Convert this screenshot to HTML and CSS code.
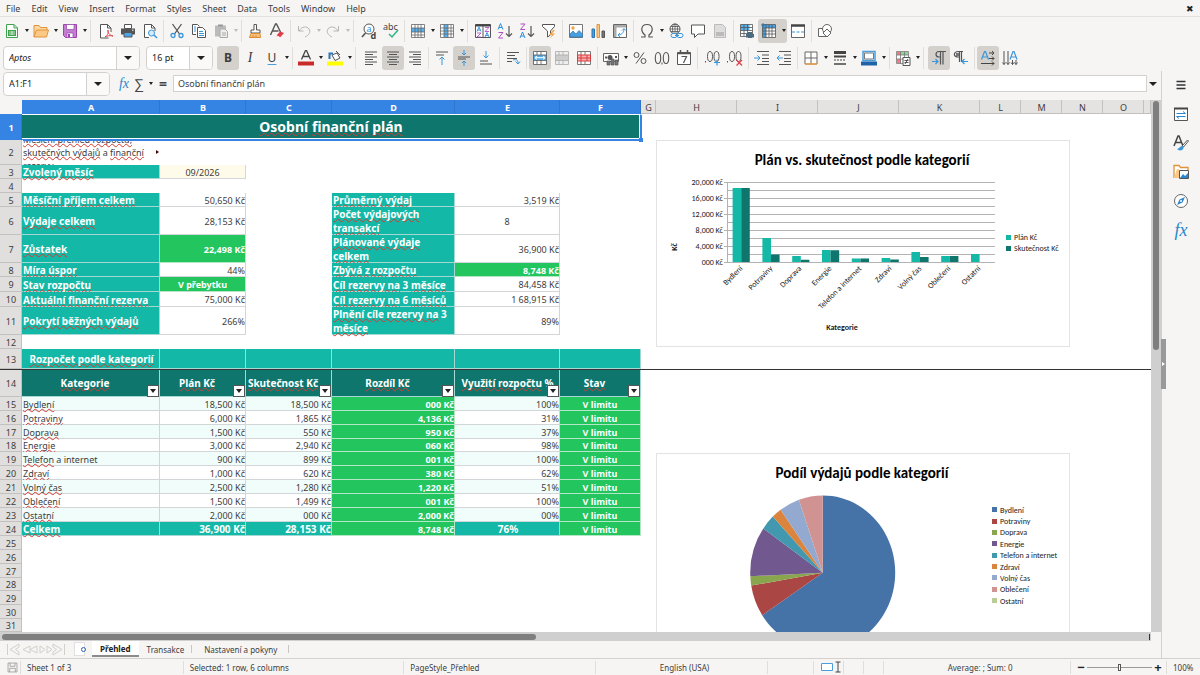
FILE: index.html
```html
<!DOCTYPE html>
<html lang="cs">
<head>
    <meta charset="UTF-8">
    <meta name="viewport" content="width=device-width, initial-scale=1.0">
    <title>Osobní finanční plán</title>
    <link rel="stylesheet" href="styles.css">
</head>
<body>
    <!-- icon sprite -->
    <svg class="sprite" aria-hidden="true">
        <symbol id="i-new" viewBox="0 0 16 16"><path d="M2.500 1.500h7.500l3.500 3.500v9.500h-11z" fill="#fff" stroke="#3fa34d"/><path d="M10 1.500v3.500h3.500" fill="none" stroke="#3fa34d"/><path d="M4 7h8v6h-8z" fill="#3fa34d"/><path d="M5 9h6M5 11h6M8 8v4" stroke="#fff" stroke-width=".7"/></symbol>
        <symbol id="i-open" viewBox="0 0 16 16"><path d="M1 14V2.500h5l1.500 2H14V7" fill="#fdd9a0" stroke="#e0933a"/><path d="M1 14 3.500 7H15.500L13.500 14z" fill="#fbc886" stroke="#e0933a"/></symbol>
        <symbol id="i-save" viewBox="0 0 16 16"><path d="M1.500 1.500h13v13h-11l-2-2z" fill="#c27fd0" stroke="#9a45ad"/><path d="M4.500 1.500h7.500v5h-7.500zM5 10h6v4.500h-6z" fill="#fff" stroke="#9a45ad" stroke-width=".7"/><path d="M6 11h2v3h-2z" fill="#9a45ad"/></symbol>
        <symbol id="i-pdf" viewBox="0 0 16 16"><path d="M10.500 15h-8V1.500h7l3.500 3.500v4" fill="#fff" stroke="#555"/><path d="M9.500 1.500v3.500H13" fill="none" stroke="#555"/><path d="M7 14c3-2 4-5 3-7-1 2 1 5 5 6-3-1-6 0-8 1" fill="none" stroke="#e0484a"/></symbol>
        <symbol id="i-print" viewBox="0 0 16 16"><path d="M4.500 1.500h7v4h-7z" fill="#fff" stroke="#555"/><path d="M1 5.500h14v6H1z" fill="#555"/><path d="M4 9.500h8v4.500H4z" fill="#4fa3e3" stroke="#555"/><path d="M12 7.200h1.500" stroke="#fff"/></symbol>
        <symbol id="i-preview" viewBox="0 0 16 16"><path d="M7 14.500H2.500v-13h7L13 5v3" fill="#fff" stroke="#555"/><path d="M9.500 1.500V5H13" fill="none" stroke="#555"/><circle cx="9.500" cy="10" r="3" fill="#d9ecfa" stroke="#3b95d9"/><path d="m12 12 3 3" stroke="#3b95d9" stroke-width="1.500"/></symbol>
        <symbol id="i-cut" viewBox="0 0 16 16"><path d="M3.500 1 10.500 11M12.500 1 5.500 11" stroke="#555" stroke-width="1.300"/><circle cx="4" cy="12.500" r="2" fill="none" stroke="#3b95d9" stroke-width="1.300"/><circle cx="12" cy="12.500" r="2" fill="none" stroke="#3b95d9" stroke-width="1.300"/></symbol>
        <symbol id="i-copy" viewBox="0 0 16 16"><path d="M5 11.500H1.500v-10h5l2 2" fill="#fff" stroke="#555"/><path d="M6.500 4.500h5l3 3v7h-8z" fill="#fff" stroke="#555"/><path d="M8 8.500h4M8 10.500h5M8 12.500h5M3 4h2M3 6h2M3 8h2" stroke="#3b95d9"/></symbol>
        <symbol id="i-paste" viewBox="0 0 16 16"><path d="M2 2.500h11v11H2z" fill="#bbb"/><path d="M5 1.500h5v2H5z" fill="#999"/><path d="M7 6h5l2.500 2.500v6H7z" fill="#eee" stroke="#aaa"/><path d="M9 10h4M9 12h4" stroke="#aaa"/></symbol>
        <symbol id="i-brush" viewBox="0 0 16 16"><path d="M7 1.500h2.500V7H13v3H4V7h3z" fill="#fff" stroke="#555"/><path d="M4 10.500h9l.5 4h-11z" fill="#f9c37a" stroke="#d98a32"/><path d="M6 12v2M9 12v2" stroke="#d98a32"/></symbol>
        <symbol id="i-clear" viewBox="0 0 16 16"><path d="M1.500 12 6.500 1h1L12 10M3.500 8h6" fill="none" stroke="#555" stroke-width="1.400"/><path d="m7 13 4-4.500 4 1.500-4 4.500z" fill="#e23c48"/><path d="M7 12.500 11 14.500" stroke="#fff"/></symbol>
        <symbol id="i-undo" viewBox="0 0 16 16"><path d="M2.500 3v5h5M3 8c3-5 8-5 10-2s0 6-4 8" fill="none" stroke="#b5b5b5"/></symbol>
        <symbol id="i-redo" viewBox="0 0 16 16"><path d="M13.500 3v5h-5M13 8c-3-5-8-5-10-2s0 6 4 8" fill="none" stroke="#b5b5b5"/></symbol>
        <symbol id="i-find" viewBox="0 0 16 16"><circle cx="8" cy="6" r="5" fill="#fff" stroke="#555"/><path d="M4.500 10 1 14" stroke="#555" stroke-width="1.600"/><text x="5.500" y="9" class="g blue">a</text><text x="9.500" y="15.500" class="g dark b">d</text></symbol>
        <symbol id="i-spell" viewBox="0 0 16 16"><text x="0" y="7" class="g dark">abc</text><path d="m6 11 3 3 6-7" fill="none" stroke="#2fb487" stroke-width="1.500"/></symbol>
        <symbol id="i-row" viewBox="0 0 16 16"><path d="M1.500 1.500h13v13h-13z" fill="#fff"/><path d="M1.500 5h13v4h-13z" fill="#57b0ec"/><path d="M1.500 1.500h13v13h-13zM1.500 5h13M1.500 9h13M1.500 12h13M5 1.500v13M8 1.500v13M11 1.500v13" fill="none" stroke="#666" stroke-width=".8"/></symbol>
        <symbol id="i-col" viewBox="0 0 16 16"><path d="M1.500 1.500h13v13h-13z" fill="#fff"/><path d="M5 1.500h4v13H5z" fill="#57b0ec"/><path d="M1.500 1.500h13v13h-13zM1.500 5h13M1.500 8h13M1.500 11h13M5 1.500v13M9 1.500v13M12 1.500v13" fill="none" stroke="#666" stroke-width=".8"/></symbol>
        <symbol id="i-sort" viewBox="0 0 16 16"><path d="M.5 1.500h15v13H.5z" fill="#fff" stroke="#555"/><path d="M.5 2.500h15" stroke="#444" stroke-width="2"/><path d="M8 3v11" stroke="#555"/><g fill="none" stroke-width=".9"><path d="m2 8.500 2-4.500 2 4.500M2.700 7h2.600M10 14l2-4.500 2 4.500M10.700 12.500h2.600" stroke="#2b8fdc"/><path d="M2 10h4l-4 4h4M10 4.500h4l-4 4h4" stroke="#b04fc4"/></g></symbol>
        <symbol id="i-az" viewBox="0 0 16 16"><path d="m1 6.500 2.500-6 2.500 6M2 4.500h3" fill="none" stroke="#2b8fdc"/><path d="M1.500 9.500H6L1.500 15H6" fill="none" stroke="#b04fc4"/><path d="M12 3v10M9 10.500l3 3 3-3" fill="none" stroke="#555" stroke-width="1.200"/></symbol>
        <symbol id="i-za" viewBox="0 0 16 16"><path d="M1.500 1H6L1.500 6.500H6" fill="none" stroke="#b04fc4"/><path d="m1 15 2.500-6L6 15M2 13h3" fill="none" stroke="#2b8fdc"/><path d="M12 3v10M9 10.500l3 3 3-3" fill="none" stroke="#555" stroke-width="1.200"/></symbol>
        <symbol id="i-filter" viewBox="0 0 16 16"><path d="M1.500 1.500h12v2L9.500 8v4l-3 2V8l-5-4.500z" fill="#fff" stroke="#555"/><path d="m12 7-4 5h3l-2 3.500 5-5h-3l3-3.500z" fill="#f3a446"/></symbol>
        <symbol id="i-image" viewBox="0 0 16 16"><path d="M1.500 1.500h13v13h-13z" fill="#fff" stroke="#777"/><path d="M2 14V11l3-3 3 3 3-3.500 3.500 3.500v3z" fill="#4a9ede" stroke="#2b76b4" stroke-width=".7"/><circle cx="5" cy="5" r="1.700" fill="#f3a446"/></symbol>
        <symbol id="i-chart" viewBox="0 0 16 16"><path d="M2 6h2.500v8.500H2z" fill="#4a9ede" stroke="#2b76b4"/><path d="M7 1.500h2.500v13H7z" fill="#fbc886" stroke="#e0933a"/><path d="M12 8h2.500v6.500H12z" fill="#777" stroke="#555"/></symbol>
        <symbol id="i-pivot" viewBox="0 0 16 16"><path d="M1.500 1.500h13v13h-13z" fill="#fff" stroke="#666"/><path d="M2 2h12v2.500H4.500V14H2z" fill="#aaa"/><path d="M6 12c3 0 6-2 6-6M10 7.500l2-2 2 2M8 10l-2 2 2 2" fill="none" stroke="#3b95d9"/></symbol>
        <symbol id="i-omega" viewBox="0 0 16 16"><path d="M2 14h4v-2C1 8 2 1.500 8 1.500S15 8 10 12v2h4" fill="none" stroke="#555" stroke-width="1.200"/></symbol>
        <symbol id="i-link" viewBox="0 0 16 16"><circle cx="7" cy="6" r="5" fill="#fff" stroke="#555"/><path d="M7 1v10M2 6h10M3 3.500h8M3 8.500h8" stroke="#555" stroke-width=".8"/><ellipse cx="7" cy="6" rx="2.500" ry="5" fill="none" stroke="#555" stroke-width=".8"/><rect x="3" y="10.500" width="6" height="4" rx="2" fill="#f6f5f4" stroke="#3b95d9"/><rect x="9" y="10.500" width="6" height="4" rx="2" fill="#f6f5f4" stroke="#3b95d9"/><path d="M7 12.500h4" stroke="#3b95d9"/></symbol>
        <symbol id="i-comment" viewBox="0 0 16 16"><path d="M1.500 2h13v9H8l-3.500 3.500V11h-3z" fill="#fff" stroke="#555"/></symbol>
        <symbol id="i-headfoot" viewBox="0 0 16 16"><path d="M2.500 1.500h8l3 3v10h-11z" fill="#ddd" stroke="#bbb"/><path d="M4 9h8v4H4z" fill="#bbb"/></symbol>
        <symbol id="i-printarea" viewBox="0 0 16 16"><path d="M1.500 1.500h12v12h-12z" fill="#fff"/><path d="M1.500 1.500h9v6h-9z" fill="#57b0ec"/><path d="M1.500 1.500h12v12h-12zM1.500 4.500h12M1.500 7.500h12M1.500 10.500h12M5 1.500v12M8.500 1.500v12" fill="none" stroke="#555" stroke-width=".8"/><path d="M7 11h8v3.500H7zM9 9h4v6H9z" fill="#4d6b80"/></symbol>
        <symbol id="i-freeze" viewBox="0 0 16 16"><path d="M1.500 1.500h13v13h-13z" fill="#fff"/><path d="M1.500 1.500h13V5H5v9.500H1.500z" fill="#4a9ede"/><path d="M1.500 1.500h13v13h-13zM1.500 5h13M5 1.500v13M8 2v12M11 2v12M1.500 8h13M1.500 11h13" fill="none" stroke="#555" stroke-width=".8"/><path d="M2 0v4M0 2h4" stroke="#2b76b4"/></symbol>
        <symbol id="i-split" viewBox="0 0 16 16"><path d="M1.500 2v12.500h13V2" fill="#fff" stroke="#666"/><path d="M1 2.500h14" stroke="#444" stroke-width="2.500"/><path d="M2 9h12" stroke="#3b95d9" stroke-dasharray="3 1.500"/></symbol>
        <symbol id="i-shapes" viewBox="0 0 16 16"><path d="M1.500 5.500h8v8h-8z" fill="#fff" stroke="#666"/><circle cx="10" cy="6" r="4.500" fill="#fff" stroke="#666"/><path d="m10 6 4 4-4 4-4-4z" fill="#fff" stroke="#666"/></symbol>
        <symbol id="i-color" viewBox="0 0 16 16"><path d="m3.500 9.500 4-9h1l4 9M5 6.500h6" fill="none" stroke="#444" stroke-width="1.300"/><path d="M0 11.500h16v4H0z" fill="#c92a2a"/></symbol>
        <symbol id="i-fill" viewBox="0 0 16 16"><path d="m5 5 5-2 3 5-5 2.500z" fill="#fff" stroke="#555"/><path d="M2.500 9V3.500H6" fill="none" stroke="#2b76b4" stroke-width="2"/><path d="m9 1 4 4" stroke="#555"/><path d="M0 11.500h16v4H0z" fill="#ff0"/></symbol>
        <symbol id="i-left" viewBox="0 0 16 16"><path d="M2 2h12M2 4.500h8M2 7h12M2 9.500h8M2 12h12M2 14.500h8" stroke="#555"/></symbol>
        <symbol id="i-center" viewBox="0 0 16 16"><path d="M2 2h12M4 4.500h8M2 7h12M4 9.500h8M2 12h12M4 14.500h8" stroke="#555"/></symbol>
        <symbol id="i-right" viewBox="0 0 16 16"><path d="M2 2h12M6 4.500h8M2 7h12M6 9.500h8M2 12h12M6 14.500h8" stroke="#555"/></symbol>
        <symbol id="i-top" viewBox="0 0 16 16"><path d="M2 2h12M2 5h8" stroke="#555"/><path d="M8 15V7M5.500 9.500 8 7l2.500 2.500" fill="none" stroke="#3b95d9"/></symbol>
        <symbol id="i-middle" viewBox="0 0 16 16"><path d="M2 7h12M2 9h8" stroke="#555"/><path d="M8 0v5M6 3l2 2 2-2M8 16v-5M6 13l2-2 2 2" fill="none" stroke="#3b95d9"/></symbol>
        <symbol id="i-bottom" viewBox="0 0 16 16"><path d="M2 11h8M2 14h12" stroke="#555"/><path d="M8 1v7M5.500 5.500 8 8l2.500-2.500" fill="none" stroke="#3b95d9"/></symbol>
        <symbol id="i-wrap" viewBox="0 0 16 16"><path d="M2 2.500h12M2 5.500h8M2 8.500h10M2 11.500h5" stroke="#555"/><path d="M8 10c4-1 5 0 5 4M10.500 11.500 13 14l2-2.500" fill="none" stroke="#3b95d9"/></symbol>
        <symbol id="i-merge" viewBox="0 0 16 16"><path d="M1.500 1.500h13v13h-13z" fill="#fff"/><path d="M1.500 5h13v5.500h-13z" fill="#57b0ec"/><path d="M1.500 1.500h13v13h-13zM1.500 5h13M1.500 10.500h13M5 1.500V5M9 1.500V5M5 10.500v4M9 10.500v4" fill="none" stroke="#555" stroke-width=".8"/><path d="M3 7.700h10M5 6 3 7.700 5 9.500M11 6l2 1.700L11 9.500" fill="none" stroke="#fff"/></symbol>
        <symbol id="i-mergecells" viewBox="0 0 16 16"><path d="M1.500 1.500h13v13h-13z" fill="#eee"/><path d="M1.500 5h13v5.500h-13z" fill="#ccc"/><path d="M1.500 1.500h13v13h-13zM1.500 5h13M1.500 10.500h13M5 1.500V5M9 1.500V5M5 10.500v4M9 10.500v4" fill="none" stroke="#aaa" stroke-width=".8"/></symbol>
        <symbol id="i-unmerge" viewBox="0 0 16 16"><path d="M1.500 1.500h13v13h-13z" fill="#fff" stroke="#777"/><path d="M2 5h12v6H2z" fill="#f8b0b0"/><path d="M5 1.500V5M9 1.500V5M5 11v4M9 11v4" stroke="#777"/><path d="M1.500 5h13v6h-13zM5 5v6M11 5v6M1.500 8h13" fill="none" stroke="#d93c3c"/></symbol>
        <symbol id="i-money" viewBox="0 0 16 16"><path d="M.5 3.500h15v8H.5z" fill="#fff" stroke="#666"/><circle cx="7" cy="7.500" r="2.500" fill="#555"/><path d="M2 7.500h2M12 7h2" stroke="#555" stroke-width="2"/><path d="M4 11h3v4H4zM8 9h3v6H8zM12 10h3v5h-3z" fill="#777" stroke="#555" stroke-width=".7"/></symbol>
        <symbol id="i-percent" viewBox="0 0 16 16"><circle cx="4.500" cy="5" r="2.500" fill="none" stroke="#555"/><circle cx="11.500" cy="11" r="2.500" fill="none" stroke="#555"/><path d="M12 2.500 4 13.500" stroke="#555"/></symbol>
        <symbol id="i-number" viewBox="0 0 16 16"><ellipse cx="4" cy="8" rx="2.700" ry="5.500" fill="none" stroke="#555" stroke-width="1.100"/><ellipse cx="12" cy="8" rx="2.700" ry="5.500" fill="none" stroke="#555" stroke-width="1.100"/><path d="M8 12.500v2" stroke="#555"/></symbol>
        <symbol id="i-date" viewBox="0 0 16 16"><path d="M1.500 2.500h13v12h-13z" fill="#fff" stroke="#555"/><path d="M1.500 3.500h13M4.500 0v3M11.500 0v3" stroke="#555" stroke-width="1.500"/><path d="M5.500 6.500h5L7.500 13" fill="none" stroke="#555" stroke-width="1.200"/></symbol>
        <symbol id="i-adddec" viewBox="0 0 16 16"><ellipse cx="5" cy="6.500" rx="2.500" ry="5" fill="none" stroke="#555"/><ellipse cx="11.500" cy="6.500" rx="2.500" ry="5" fill="none" stroke="#555"/><path d="M.5 11v1.500" stroke="#555"/><path d="M12 9.500v6M9 12.500h6" stroke="#3b95d9" stroke-width="1.200"/></symbol>
        <symbol id="i-deldec" viewBox="0 0 16 16"><ellipse cx="5" cy="6.500" rx="2.500" ry="5" fill="none" stroke="#555"/><ellipse cx="11.500" cy="6.500" rx="2.500" ry="5" fill="none" stroke="#555"/><path d="M.5 11v1.500" stroke="#555"/><path d="m9.500 10 5.500 5.500M15 10l-5.500 5.500" stroke="#e23c48" stroke-width="1.200"/></symbol>
        <symbol id="i-indent" viewBox="0 0 16 16"><path d="M3 1.500h12M8 5h7M8 8.500h7M8 11.500h7M3 14.500h12" stroke="#555"/><path d="M0 8h6M3.500 5.500 6 8l-2.500 2.500" fill="none" stroke="#3b95d9"/></symbol>
        <symbol id="i-outdent" viewBox="0 0 16 16"><path d="M3 1.500h12M8 5h7M8 8.500h7M8 11.500h7M3 14.500h12" stroke="#555"/><path d="M7 8H1M3.500 5.500 1 8l2.500 2.500" fill="none" stroke="#3b95d9"/></symbol>
        <symbol id="i-borders" viewBox="0 0 16 16"><path d="M2 2h12v12H2z" fill="#fff" stroke="#666"/><path d="M8 2v12M2 8h12" stroke="#666"/><path d="M2 14h12" stroke="#f0a04b" stroke-width="1.500"/></symbol>
        <symbol id="i-linestyle" viewBox="0 0 16 16"><path d="M2 2.500h12" stroke="#444" stroke-width="3"/><path d="M2 6.500h12" stroke="#444" stroke-width="2"/><path d="M2 10h12" stroke="#444" stroke-dasharray="2 1"/><path d="M2 14h12" stroke="#444" stroke-width="1.500"/></symbol>
        <symbol id="i-bordercolor" viewBox="0 0 16 16"><path d="M2 1.500h12v9H2z" fill="#fff" stroke="#4a9ede" stroke-width="1.500"/><path d="M3.500 3h9v6h-9z" fill="none" stroke="#777"/><path d="M0 11.500h16v4H0z" fill="#1e62a8"/></symbol>
        <symbol id="i-cond" viewBox="0 0 16 16"><path d="M1.500 1.500h12v12h-12z" fill="#fff"/><path d="M2 2h4v3H2zM2 9h4v4H2z" fill="#f27b7b"/><path d="M6 2h7v3H6z" fill="#8ed59b"/><path d="M1.500 1.500h12v12h-12zM1.500 5h12M1.500 9h12M5.500 1.500v12M9.500 1.500v12" fill="none" stroke="#777" stroke-width=".8"/><path d="M8 7.500h7v8H8z" fill="#fff" stroke="#555"/><path d="M9.500 10.500h4M9.500 12.500h4M13 9l-3 5" stroke="#555"/></symbol>
        <symbol id="i-ltr" viewBox="0 0 16 16"><path d="M15 1.500H8C4 1.500 4 7 8 7h1M9.500 1.500v13M12 1.500v13" fill="none" stroke="#555" stroke-width="1.200"/><path d="M1 11.500h6M4.500 9 7 11.500 4.500 14" fill="none" stroke="#3b95d9" stroke-width="1.200"/></symbol>
        <symbol id="i-rtl" viewBox="0 0 16 16"><path d="M10 1.500H5.500C0 1.500 0 7 5.500 7H6M6.500 1.500V12M8.500 1.500V12" fill="none" stroke="#555" stroke-width="1.200"/><path d="M3 3h3v3H3z" fill="#777"/><path d="M15 11.500H9M11.500 9 9 11.500l2.500 2.500" fill="none" stroke="#3b95d9" stroke-width="1.200"/></symbol>
        <symbol id="i-horz" viewBox="0 0 16 16"><path d="m1.500 9.500 3-8h1l3 8M3 7h4.500" fill="none" stroke="#3b95d9" stroke-width="1.200"/><path d="M9 3h5M12 1l2 2-2 2M9 8.500h5M12 6.500l2 2-2 2M1 13.500h13M12 11.500l2 2-2 2" fill="none" stroke="#444"/></symbol>
        <symbol id="i-vert" viewBox="0 0 16 16"><path d="m8 9.500 3-8h1l3 8M9.500 7H14" fill="none" stroke="#3b95d9" stroke-width="1.200"/><path d="M2 1v13.500M.5 12.500l1.500 2 1.500-2M6 1v13.500M4.500 12.500l1.500 2 1.500-2M10.500 10v4.500M9 12.500l1.500 2 1.500-2M14 10v4.500M12.500 12.500l1.500 2 1.500-2" fill="none" stroke="#555"/></symbol>
        <symbol id="i-menu" viewBox="0 0 16 16"><path d="M3.500 4.500h9M3.500 8h9M3.500 11.500h9" stroke="#333" stroke-width="1.500"/></symbol>
        <symbol id="i-props" viewBox="0 0 16 16"><path d="M1.500 2v12.500h13V2" fill="#fff" stroke="#555"/><path d="M1 2.500h14" stroke="#444" stroke-width="2"/><path d="M3.500 7.500h9M10 5.500l2.500 2M3.500 10.500h9M6 12.500l-2.500-2" stroke="#2b86cf"/></symbol>
        <symbol id="i-styles" viewBox="0 0 16 16"><path d="m1 11 4-10h1l4 10M2.500 7.500H8" fill="none" stroke="#444" stroke-width="1.500"/><path d="m9 11 5.500-6 1 1-5 6z" fill="#fff" stroke="#555"/><path d="M4 14c2 0 3-3 5-3s2 3 0 4-4 0-5-1" fill="#3b95d9"/></symbol>
        <symbol id="i-gallery" viewBox="0 0 16 16"><path d="M1 14V1.500h5l1.500 2H15V6" fill="#fff" stroke="#e0933a" stroke-width="1.300"/><path d="m1 14 3-9h2v9z" fill="#fbc886"/><path d="M6.500 6.500h9v8h-9z" fill="#fff" stroke="#555"/><path d="m7 14 3-4 2 2 3-3v5z" fill="#2b86cf"/></symbol>
        <symbol id="i-nav" viewBox="0 0 16 16"><circle cx="8" cy="8" r="6.500" fill="#fff" stroke="#666"/><path d="m12 4-2.500 5.500L4 12l2.500-5.500z" fill="#2b86cf"/><circle cx="8" cy="8" r="1" fill="#fff"/></symbol>
        <symbol id="i-disk" viewBox="0 0 16 16"><path d="M2.500 2.500h11v11h-11z" fill="none" stroke="#999"/><path d="M5 2.500v4h6v-4M4.500 13.500V9h7v4.500" fill="none" stroke="#999"/></symbol>
        <symbol id="i-navtabs" viewBox="0 0 60 14"><path d="M1.500 2v11M13 2v3L9.500 7.500 13 10v3L4 7.500zM24 4l-7 3.500 7 3.500zM31 4l-7 3.500 7 3.500zM34 4v7l5-3.500zM41 4v7l5-3.500zM47 2v3l3.500 2.500L47 10v3l9-5.500zM58.500 2v11" fill="none" stroke="#d3d0cc"/></symbol>
    </svg>

    <nav class="menubar">
        <button>File</button><button>Edit</button><button>View</button><button>Insert</button><button>Format</button><button>Styles</button><button>Sheet</button><button>Data</button><button>Tools</button><button>Window</button><button>Help</button>
        <button class="close" aria-label="Close">✖</button>
    </nav>

    <div class="toolbar" id="standardBar">
        <div class="group wide">
            <button class="tool"><svg><use href="#i-new"/></svg></button><button class="drop" aria-label="New options"></button>
            <button class="tool"><svg><use href="#i-open"/></svg></button><button class="drop" aria-label="Recent"></button>
            <button class="tool"><svg><use href="#i-save"/></svg></button><button class="drop" aria-label="Save options"></button>
        </div>
        <div class="group">
            <button class="tool"><svg><use href="#i-pdf"/></svg></button>
            <button class="tool"><svg><use href="#i-print"/></svg></button>
            <button class="tool"><svg><use href="#i-preview"/></svg></button>
        </div>
        <div class="group">
            <button class="tool"><svg><use href="#i-cut"/></svg></button>
            <button class="tool"><svg><use href="#i-copy"/></svg></button>
            <button class="tool" disabled><svg><use href="#i-paste"/></svg></button><button class="drop" disabled></button>
        </div>
        <div class="group">
            <button class="tool"><svg><use href="#i-brush"/></svg></button>
            <button class="tool"><svg><use href="#i-clear"/></svg></button>
        </div>
        <div class="group wide">
            <button class="tool" disabled><svg><use href="#i-undo"/></svg></button><button class="drop" disabled></button>
            <button class="tool" disabled><svg><use href="#i-redo"/></svg></button><button class="drop" disabled></button>
        </div>
        <div class="group">
            <button class="tool"><svg><use href="#i-find"/></svg></button>
            <button class="tool"><svg><use href="#i-spell"/></svg></button>
        </div>
        <div class="group wide">
            <button class="tool"><svg><use href="#i-row"/></svg></button><button class="drop"></button>
            <button class="tool"><svg><use href="#i-col"/></svg></button><button class="drop"></button>
        </div>
        <div class="group">
            <button class="tool"><svg><use href="#i-sort"/></svg></button>
            <button class="tool"><svg><use href="#i-az"/></svg></button>
            <button class="tool"><svg><use href="#i-za"/></svg></button>
            <button class="tool"><svg><use href="#i-filter"/></svg></button>
        </div>
        <div class="group">
            <button class="tool"><svg><use href="#i-image"/></svg></button>
            <button class="tool"><svg><use href="#i-chart"/></svg></button>
            <button class="tool"><svg><use href="#i-pivot"/></svg></button>
        </div>
        <div class="group">
            <button class="tool"><svg><use href="#i-omega"/></svg></button><button class="drop"></button>
            <button class="tool"><svg><use href="#i-link"/></svg></button>
            <button class="tool"><svg><use href="#i-comment"/></svg></button>
            <button class="tool" disabled><svg><use href="#i-headfoot"/></svg></button>
        </div>
        <div class="group">
            <button class="tool"><svg><use href="#i-printarea"/></svg></button>
            <span class="split on"><button class="tool"><svg><use href="#i-freeze"/></svg></button><button class="drop"></button></span>
            <button class="tool"><svg><use href="#i-split"/></svg></button>
        </div>
        <div class="group last">
            <button class="tool"><svg><use href="#i-shapes"/></svg></button>
        </div>
    </div>

    <div class="toolbar" id="formattingBar">
        <div class="combo font-name"><input type="text" value="Aptos" aria-label="Font name"><button aria-label="Font list"></button></div>
        <div class="combo font-size"><input type="text" value="16 pt" aria-label="Font size"><button aria-label="Size list"></button></div>
        <div class="group">
            <button class="tool letter on"><b>B</b></button>
            <button class="tool letter"><i>I</i></button>
            <button class="tool letter"><u>U</u></button><button class="drop"></button>
        </div>
        <div class="group wide">
            <button class="tool"><svg><use href="#i-color"/></svg></button><button class="drop"></button>
            <button class="tool"><svg><use href="#i-fill"/></svg></button><button class="drop"></button>
        </div>
        <div class="group">
            <button class="tool"><svg><use href="#i-left"/></svg></button>
            <button class="tool on"><svg><use href="#i-center"/></svg></button>
            <button class="tool"><svg><use href="#i-right"/></svg></button>
        </div>
        <div class="group">
            <button class="tool"><svg><use href="#i-top"/></svg></button>
            <button class="tool on"><svg><use href="#i-middle"/></svg></button>
            <button class="tool"><svg><use href="#i-bottom"/></svg></button>
        </div>
        <div class="group">
            <button class="tool"><svg><use href="#i-wrap"/></svg></button>
        </div>
        <div class="group">
            <button class="tool on"><svg><use href="#i-merge"/></svg></button>
            <button class="tool" disabled><svg><use href="#i-mergecells"/></svg></button>
            <button class="tool"><svg><use href="#i-unmerge"/></svg></button>
        </div>
        <div class="group wide">
            <button class="tool"><svg><use href="#i-money"/></svg></button><button class="drop"></button>
            <button class="tool"><svg><use href="#i-percent"/></svg></button>
            <button class="tool"><svg><use href="#i-number"/></svg></button>
            <button class="tool"><svg><use href="#i-date"/></svg></button>
        </div>
        <div class="group">
            <button class="tool"><svg><use href="#i-adddec"/></svg></button>
            <button class="tool"><svg><use href="#i-deldec"/></svg></button>
        </div>
        <div class="group">
            <button class="tool"><svg><use href="#i-indent"/></svg></button>
            <button class="tool"><svg><use href="#i-outdent"/></svg></button>
        </div>
        <div class="group">
            <button class="tool"><svg><use href="#i-borders"/></svg></button><button class="drop"></button>
            <button class="tool"><svg><use href="#i-linestyle"/></svg></button><button class="drop"></button>
            <button class="tool"><svg><use href="#i-bordercolor"/></svg></button><button class="drop"></button>
        </div>
        <div class="group wide">
            <button class="tool"><svg><use href="#i-cond"/></svg></button><button class="drop"></button>
        </div>
        <div class="group">
            <button class="tool on"><svg><use href="#i-ltr"/></svg></button>
            <button class="tool"><svg><use href="#i-rtl"/></svg></button>
        </div>
        <div class="group last">
            <button class="tool on"><svg><use href="#i-horz"/></svg></button>
            <button class="tool"><svg><use href="#i-vert"/></svg></button>
        </div>
    </div>

    <div class="main">
        <div class="workspace">
            <div class="formula-bar">
                <div class="combo name-box"><input type="text" value="A1:F1" aria-label="Name box"><button aria-label="Names"></button></div>
                <div class="formula-tools">
                    <button class="fx">fx</button><button class="sigma">∑</button><button class="drop"></button><button class="equals">=</button>
                </div>
                <input class="formula-input" type="text" value="Osobní finanční plán" aria-label="Formula">
                <button class="expand" aria-label="Expand"></button>
            </div>

            <div class="sheet-row">
                <div class="sheet">
                    <table class="grid">
                        <colgroup>
                            <col class="c-head"><col class="c-a"><col class="c-b"><col class="c-b"><col class="c-d"><col class="c-e"><col class="c-f"><col class="c-g"><col class="c-f"><col class="c-f"><col class="c-f"><col class="c-f"><col class="c-l"><col class="c-l"><col class="c-l"><col class="c-l"><col>
                        </colgroup>
                        <thead>
                            <tr><th class="corner"></th><th class="sel">A</th><th class="sel">B</th><th class="sel">C</th><th class="sel">D</th><th class="sel">E</th><th class="sel">F</th><th>G</th><th>H</th><th>I</th><th>J</th><th>K</th><th>L</th><th>M</th><th>N</th><th>O</th><th></th></tr>
                        </thead>
                        <tbody>
                            <tr class="h-title"><th class="sel">1</th><td colspan="6" class="title"><span class="sp">Osobní</span> <span class="sp">finanční</span> <span class="sp">plán</span></td></tr>
                            <tr class="h-note"><th>2</th><td class="note"><div><p><span class="sp">Měsíční přehled rozpočtu,</span> <span class="sp">skutečných výdajů</span> a <span class="sp">finanční</span> <span class="sp">rezervy.</span></p></div></td></tr>
                            <tr><th>3</th><td class="label"><span class="sp">Zvolený měsíc</span></td><td class="val center month">09/2026</td></tr>
                            <tr><th>4</th></tr>
                            <tr><th>5</th><td class="label"><span class="sp">Měsíční příjem celkem</span></td><td class="val">50,650 Kč</td><td></td><td class="label"><span class="sp">Průměrný výdaj</span></td><td class="val">3,519 Kč</td></tr>
                            <tr class="h-double"><th>6</th><td class="label"><span class="sp">Výdaje celkem</span></td><td class="val">28,153 Kč</td><td></td><td class="label"><span class="sp">Počet výdajových transakcí</span></td><td class="val center">8</td></tr>
                            <tr class="h-double"><th>7</th><td class="label"><span class="sp">Zůstatek</span></td><td class="val good">22,498 Kč</td><td></td><td class="label"><span class="sp">Plánované výdaje celkem</span></td><td class="val">36,900 Kč</td></tr>
                            <tr><th>8</th><td class="label"><span class="sp">Míra úspor</span></td><td class="val">44%</td><td></td><td class="label"><span class="sp">Zbývá z rozpočtu</span></td><td class="val good">8,748 Kč</td></tr>
                            <tr class="h-15"><th>9</th><td class="label"><span class="sp">Stav rozpočtu</span></td><td class="val good center">V přebytku</td><td></td><td class="label"><span class="sp">Cíl rezervy na</span> 3 <span class="sp">měsíce</span></td><td class="val">84,458 Kč</td></tr>
                            <tr class="h-15"><th>10</th><td class="label"><span class="sp">Aktuální finanční rezerva</span></td><td class="val">75,000 Kč</td><td></td><td class="label"><span class="sp">Cíl rezervy na</span> 6 <span class="sp">měsíců</span></td><td class="val">1 68,915 Kč</td></tr>
                            <tr class="h-double"><th>11</th><td class="label"><span class="sp">Pokrytí běžných výdajů</span></td><td class="val">266%</td><td></td><td class="label"><span class="sp">Plnění cíle rezervy na</span> 3 <span class="sp">měsíce</span></td><td class="val">89%</td></tr>
                            <tr><th>12</th></tr>
                            <tr class="h-section"><th>13</th><td class="label center"><span class="sp">Rozpočet podle kategorií</span></td><td class="label"></td><td class="label"></td><td class="label"></td><td class="label"></td><td class="label"></td><td colspan="10"></td></tr>
                            <tr class="h-head"><th>14</th><td class="head"><span class="sp">Kategorie</span><button class="filter"></button></td><td class="head"><span class="sp">Plán Kč</span><button class="filter"></button></td><td class="head"><span class="sp">Skutečnost Kč</span><button class="filter"></button></td><td class="head"><span class="sp">Rozdíl Kč</span><button class="filter"></button></td><td class="head full"><span class="sp">Využití rozpočtu</span> %<button class="filter"></button></td><td class="head"><span class="sp">Stav</span><button class="filter"></button></td></tr>
                            <tr class="odd"><th>15</th><td class="val name"><span class="sp">Bydlení</span></td><td class="val">18,500 Kč</td><td class="val">18,500 Kč</td><td class="val good">000 Kč</td><td class="val">100%</td><td class="val good center">V limitu</td></tr>
                            <tr><th>16</th><td class="val name"><span class="sp">Potraviny</span></td><td class="val">6,000 Kč</td><td class="val">1,865 Kč</td><td class="val good">4,136 Kč</td><td class="val">31%</td><td class="val good center">V limitu</td></tr>
                            <tr class="odd"><th>17</th><td class="val name"><span class="sp">Doprava</span></td><td class="val">1,500 Kč</td><td class="val">550 Kč</td><td class="val good">950 Kč</td><td class="val">37%</td><td class="val good center">V limitu</td></tr>
                            <tr class="h-13"><th>18</th><td class="val name"><span class="sp">Energie</span></td><td class="val">3,000 Kč</td><td class="val">2,940 Kč</td><td class="val good">060 Kč</td><td class="val">98%</td><td class="val good center">V limitu</td></tr>
                            <tr class="odd"><th>19</th><td class="val name"><span class="sp">Telefon</span> a internet</td><td class="val">900 Kč</td><td class="val">899 Kč</td><td class="val good">001 Kč</td><td class="val">100%</td><td class="val good center">V limitu</td></tr>
                            <tr><th>20</th><td class="val name"><span class="sp">Zdraví</span></td><td class="val">1,000 Kč</td><td class="val">620 Kč</td><td class="val good">380 Kč</td><td class="val">62%</td><td class="val good center">V limitu</td></tr>
                            <tr class="odd"><th>21</th><td class="val name"><span class="sp">Volný čas</span></td><td class="val">2,500 Kč</td><td class="val">1,280 Kč</td><td class="val good">1,220 Kč</td><td class="val">51%</td><td class="val good center">V limitu</td></tr>
                            <tr><th>22</th><td class="val name"><span class="sp">Oblečení</span></td><td class="val">1,500 Kč</td><td class="val">1,499 Kč</td><td class="val good">001 Kč</td><td class="val">100%</td><td class="val good center">V limitu</td></tr>
                            <tr class="odd"><th>23</th><td class="val name"><span class="sp">Ostatní</span></td><td class="val">2,000 Kč</td><td class="val">000 Kč</td><td class="val good">2,000 Kč</td><td class="val">00%</td><td class="val good center">V limitu</td></tr>
                            <tr class="total"><th>24</th><td class="label"><span class="sp">Celkem</span></td><td class="label right">36,900 Kč</td><td class="label right">28,153 Kč</td><td class="val good">8,748 Kč</td><td class="label center">76%</td><td class="val good center">V limitu</td></tr>
                            <tr><th>25</th></tr>
                            <tr><th>26</th></tr>
                            <tr><th>27</th></tr>
                            <tr class="h-13"><th>28</th></tr>
                            <tr><th>29</th></tr>
                            <tr><th>30</th></tr>
                            <tr class="h-13"><th>31</th></tr>
                        </tbody>
                    </table>

                    <!-- charts float over the cells -->
                    <svg class="chart chart-bar" viewBox="0 0 414 207" role="img" aria-label="Plán vs. skutečnost podle kategorií">
                        <rect x=".5" y=".5" width="413" height="206" fill="#fff" stroke="#e3e3e3"/>
                        <text x="206" y="25" class="chart-title">Plán vs. skutečnost podle kategorií</text>
                        <path d="M68 42.500H339M71 50.500H339M68 58.500H339M71 66.500H339M68 74.500H339M71 82.500H339M68 90.500H339M71 98.500H339M68 106.500H339M71 114.500H339M68 122.500H339M71.500 42V122" stroke="#b3b3b3"/>
                        <g class="end">
                            <text x="67" y="45">20,000 Kč</text><text x="67" y="61">16,000 Kč</text><text x="67" y="77">12,000 Kč</text><text x="67" y="93">8,000 Kč</text><text x="67" y="109">4,000 Kč</text><text x="67" y="125">000 Kč</text>
                        </g>
                        <path fill="#14b8a6" d="M76.600 122v-74h8.600v74zM106.400 122v-24h8.600v24zM136.200 122v-6h8.600v6zM166 122v-12h8.600v12zM195.800 122v-3.600h8.600v3.600zM225.600 122v-4h8.600v4zM255.400 122v-10h8.600v10zM285.200 122v-6h8.600v6zM315 122v-8h8.600v8z"/>
                        <path fill="#0f766e" d="M85.200 122v-74h8.600v74zM115 122v-7.500h8.600v7.500zM144.800 122v-2.200h8.600v2.200zM174.600 122v-11.800h8.600v11.800zM204.400 122v-3.600h8.600v3.600zM234.200 122v-2.500h8.600v2.500zM264 122v-5.100h8.600v5.100zM293.800 122v-6h8.600v6z"/>
                        <g class="end">
                            <text transform="translate(87 129) rotate(-45)">Bydlení</text>
                            <text transform="translate(117 129) rotate(-45)">Potraviny</text>
                            <text transform="translate(146 129) rotate(-45)">Doprava</text>
                            <text transform="translate(176 129) rotate(-45)">Energie</text>
                            <text transform="translate(206 129) rotate(-45)">Telefon a internet</text>
                            <text transform="translate(236 129) rotate(-45)">Zdraví</text>
                            <text transform="translate(266 129) rotate(-45)">Volný čas</text>
                            <text transform="translate(295 129) rotate(-45)">Oblečení</text>
                            <text transform="translate(325 129) rotate(-45)">Ostatní</text>
                        </g>
                        <text x="186" y="190" class="axis">Kategorie</text>
                        <text transform="translate(21 107) rotate(-90)" class="axis">Kč</text>
                        <rect x="350" y="95" width="5" height="5" fill="#14b8a6"/><text x="358" y="100">Plán Kč</text>
                        <rect x="350" y="106" width="5" height="5" fill="#0f766e"/><text x="358" y="111">Skutečnost Kč</text>
                    </svg>

                    <svg class="chart chart-pie" viewBox="0 0 414 207" role="img" aria-label="Podíl výdajů podle kategorií">
                        <rect x=".5" y=".5" width="413" height="206" fill="#fff" stroke="#e3e3e3"/>
                        <text x="206" y="25" class="chart-title">Podíl výdajů podle kategorií</text>
                        <path fill="#4572a7" d="M166.700 119.700V42.400A72.500 77.300 0 1 1 106.200 162.300z"/>
                        <path fill="#aa4643" d="M166.700 119.700 106.200 162.300A72.500 77.300 0 0 1 95.200 132.600z"/>
                        <path fill="#89a54e" d="M166.700 119.700 95.200 132.600A72.500 77.300 0 0 1 94.300 123.200z"/>
                        <path fill="#71588f" d="M166.700 119.700 94.300 123.200A72.500 77.300 0 0 1 107.300 75.400z"/>
                        <path fill="#4198af" d="M166.700 119.700 107.300 75.400A72.500 77.300 0 0 1 116.800 63.600z"/>
                        <path fill="#db843d" d="M166.700 119.700 116.800 63.600A72.500 77.300 0 0 1 124.600 56.800z"/>
                        <path fill="#93a9cf" d="M166.700 119.700 124.600 56.800A72.500 77.300 0 0 1 142.900 46.700z"/>
                        <path fill="#d19392" d="M166.700 119.700 142.900 46.700A72.500 77.300 0 0 1 166.700 42.400z"/>
                        <rect x="336" y="54" width="5" height="5" fill="#4572a7"/><text x="344" y="60">Bydlení</text>
                        <rect x="336" y="66" width="5" height="5" fill="#aa4643"/><text x="344" y="71">Potraviny</text>
                        <rect x="336" y="77" width="5" height="5" fill="#89a54e"/><text x="344" y="82">Doprava</text>
                        <rect x="336" y="88" width="5" height="5" fill="#71588f"/><text x="344" y="94">Energie</text>
                        <rect x="336" y="100" width="5" height="5" fill="#4198af"/><text x="344" y="105">Telefon a internet</text>
                        <rect x="336" y="111" width="5" height="5" fill="#db843d"/><text x="344" y="117">Zdraví</text>
                        <rect x="336" y="122" width="5" height="5" fill="#93a9cf"/><text x="344" y="128">Volný čas</text>
                        <rect x="336" y="134" width="5" height="5" fill="#d19392"/><text x="344" y="139">Oblečení</text>
                        <rect x="336" y="145" width="5" height="5" fill="#b9cd96"/><text x="344" y="151">Ostatní</text>
                    </svg>
                </div>
                <div class="vscroll"><div class="thumb"></div></div>
            </div>
            <div class="hscroll"><div class="thumb"></div><i></i></div>

            <div class="tabs">
                <svg class="tab-nav"><use href="#i-navtabs"/></svg>
                <button class="add-sheet" aria-label="Add sheet"><span></span></button>
                <button class="tab active">Přehled</button>
                <button class="tab">Transakce</button>
                <button class="tab last">Nastavení a pokyny</button>
            </div>
        </div>

        <aside class="sidebar">
            <button class="handle" aria-label="Hide sidebar"></button>
            <button class="tool"><svg><use href="#i-menu"/></svg></button>
            <button class="tool"><svg><use href="#i-props"/></svg></button>
            <button class="tool"><svg><use href="#i-styles"/></svg></button>
            <button class="tool"><svg><use href="#i-gallery"/></svg></button>
            <button class="tool"><svg><use href="#i-nav"/></svg></button>
            <button class="tool fx">fx</button>
        </aside>
    </div>

    <footer class="statusbar">
        <div class="s-icon"><svg><use href="#i-disk"/></svg></div>
        <div class="s-sheet">Sheet 1 of 3</div>
        <div class="s-sel">Selected: 1 row, 6 columns</div>
        <div class="s-page">PageStyle_Přehled</div>
        <div class="s-lang">English (USA)</div>
        <div class="s-insert"></div>
        <div class="s-mode"><svg viewBox="0 0 20 14"><path d="M1.500 3.500h11v7h-11z" fill="#fff" stroke="#4a9ede"/><path d="M15.500 2h5M15.500 12h5M18 2v10" stroke="#444"/></svg></div>
        <div class="s-small"></div>
        <div class="s-small"></div>
        <div class="s-sum">Average: ; Sum: 0</div>
        <div class="s-zoom"><button aria-label="Zoom out">−</button><input type="range" min="0" max="100" value="50" aria-label="Zoom"><button aria-label="Zoom in">+</button></div>
        <div class="s-percent">100%</div>
    </footer>
</body>
</html>
```

FILE: styles.css
```css
* {
    box-sizing: border-box;
}
body {
    margin: 0;
    height: 100vh;
    display: flex;
    flex-direction: column;
    overflow: hidden;
    background: #f6f5f4;
    color: #3d3d3d;
    font-family: "Noto Sans", sans-serif;
    font-size: 9px;
}
button, input {
    font: inherit;
    color: inherit;
    margin: 0;
    padding: 0;
    border: 0;
    background: none;
}
.sprite {
    display: none;
}
.sprite text {
    font-family: "Noto Sans", sans-serif;
}
.g { font-size: 9px; }
.b { font-weight: bold; }
.blue { fill: #2b8fdc; }
.dark { fill: #444; }

/* menu */
.menubar {
    display: flex;
    flex: none;
    height: 17px;
    padding-left: 6px;
    gap: 11px;
    border-bottom: 1px solid #e4e2e0;
}
.menubar .close {
    margin-left: auto;
    margin-right: 6px;
    color: #222;
}

/* toolbars */
.toolbar {
    display: flex;
    flex: none;
    align-items: center;
    height: 27px;
    padding-left: 1px;
}
.group {
    display: flex;
    align-items: center;
    flex: none;
    height: 22px;
    padding-right: 2px;
    margin-right: 2px;
    border-right: 1px solid #e0dedb;
}
.group.wide {
    margin-right: 4px;
}
.group.last {
    border: 0;
}
.tool {
    display: flex;
    align-items: center;
    justify-content: center;
    width: 22px;
    height: 24px;
    border-radius: 3px;
}
.tool svg {
    width: 16px;
    height: 16px;
    overflow: visible;
}
.tool.letter {
    font-size: 12px;
}
.tool.letter i {
    font-family: "Liberation Serif", serif;
    font-size: 14px;
}
.tool.letter u {
    text-decoration-color: #4a9ede;
    text-underline-offset: 2px;
}
.split {
    display: flex;
    align-items: center;
    border-radius: 3px;
}
.on {
    background: #d4d0cc;
}
.drop {
    display: flex;
    align-items: center;
    justify-content: center;
    width: 7px;
    height: 22px;
}
.drop::after, .combo button::after, .expand::after, .filter::after {
    content: "";
    border: 2px solid transparent;
    border-top: 3px solid #222;
    border-bottom: 0;
}
.drop:disabled::after {
    border-top-color: #bbb;
}
.combo {
    display: flex;
    flex: none;
    height: 24px;
    border: 1px solid #d3d0cd;
    border-radius: 4px;
    background: #fff;
    overflow: hidden;
}
.combo input {
    flex: 1;
    min-width: 0;
    padding-left: 5px;
    color: #222;
}
.combo button {
    display: flex;
    align-items: center;
    justify-content: center;
    width: 23px;
    border-left: 1px solid #d3d0cd;
    background: #faf9f8;
}
.combo button::after, .expand::after {
    border-width: 4px 4px 0;
}
.font-name {
    width: 137px;
    margin: 0 6px 0 2px;
}
.font-name input {
    font-style: italic;
}
.font-size {
    width: 67px;
    margin-right: 4px;
}

.main {
    display: flex;
    flex: 1;
    min-height: 0;
}
.workspace {
    display: flex;
    flex-direction: column;
    flex: 1;
    min-width: 0;
}
.formula-bar {
    display: flex;
    align-items: center;
    flex: none;
    height: 29px;
    padding: 0 2px 4px 3px;
}
.name-box {
    width: 107px;
}
.formula-tools {
    display: flex;
    align-items: center;
    width: 63px;
    padding-left: 7px;
    color: #444;
}
.fx {
    width: 14px;
    color: #2b86cf;
    font-family: "Liberation Serif", serif;
    font-size: 14px;
    font-style: italic;
}
.sigma {
    width: 16px;
    font-size: 14px;
}
.equals {
    width: 18px;
    font-size: 14px;
    font-weight: bold;
}
.formula-input {
    flex: 1;
    min-width: 0;
    height: 17px;
    padding-left: 4px;
    border: 1px solid #d3d0cd;
    background: #fff;
}
.expand {
    display: flex;
    align-items: center;
    justify-content: center;
    width: 12px;
}

/* sheet */
.sheet-row {
    display: flex;
    flex: 1;
    min-height: 0;
}
.sheet {
    position: relative;
    flex: 1;
    overflow: hidden;
    background: #fff;
}
.grid {
    width: 100%;
    table-layout: fixed;
    border-collapse: separate;
    border-spacing: 0;
    line-height: 13px;
}
.c-head { width: 22px; }
.c-a { width: 138px; }
.c-b { width: 86px; }
.c-d { width: 123px; }
.c-e { width: 105px; }
.c-f { width: 81px; }
.c-g { width: 15px; }
.c-l { width: 41px; }
.grid tr {
    height: 14px;
}
.grid .h-13 { height: 13px; }
.grid .h-15 { height: 15px; }
.grid .h-title { height: 26px; }
.grid .h-note { height: 25px; }
.grid .h-double { height: 28px; }
.grid .h-section { height: 21px; }
.grid .h-head { height: 27px; }
.grid th, .grid td {
    position: relative;
    padding: 0;
}
.grid th {
    background: #e0dfde;
    box-shadow: inset -1px -1px 0 #c3c1bf;
    font-weight: normal;
}
.grid thead th {
    background: #e4e3e2;
}
.grid .corner {
    background: #f6f5f4;
    box-shadow: none;
}
.grid th.sel {
    background: #3584e4;
    box-shadow: inset -1px 0 0 #2f76cc;
    color: #fff;
    font-weight: bold;
}
.sp {
    text-decoration: underline wavy #d8392f 1px;
    text-underline-offset: 0;
    text-decoration-skip-ink: none;
}
.grid .title {
    background: #0f766e;
    border: 1px solid #3584e4;
    border-left: 0;
    border-top: 1px solid #fff;
    box-shadow: inset -1px -1px 0 #fff, 1px 1px 0 #3584e4;
    color: #fff;
    font-size: 14px;
    font-weight: bold;
    line-height: 20px;
    text-align: center;
    z-index: 1;
}
.title::after {
    content: "";
    position: absolute;
    right: -3px;
    bottom: -3px;
    width: 4px;
    height: 4px;
    background: #3584e4;
}
.note div {
    display: flex;
    align-items: center;
    height: 25px;
    padding-left: 1px;
    overflow: hidden;
}
.note p {
    width: 125px;
    margin: 0;
}
.note::after {
    content: "";
    position: absolute;
    right: 1px;
    top: 10px;
    border: 2px solid transparent;
    border-left: 3px solid #400;
    border-right: 0;
}
.grid .label {
    padding-left: 1px;
    background: #14b8a6;
    box-shadow: inset -1px -1px 0 #a5d8d2;
    color: #fff;
    font-size: 10px;
    font-weight: bold;
    line-height: 14px;
}
.grid .val {
    padding-right: 1px;
    box-shadow: inset -1px -1px 0 #d3d6d8;
    text-align: right;
}
.grid .name {
    padding-left: 1px;
    text-align: left;
}
.odd .val {
    background: #f0fdfa;
}
.grid .month {
    background: #fffbeb;
}
.grid .good {
    background: #22c55e;
    box-shadow: inset -1px -1px 0 #b5e6c6;
    color: #fff;
    font-weight: bold;
}
.grid .center {
    text-align: center;
}
.grid .right {
    padding-right: 1px;
    text-align: right;
}
.grid .total .label, .h-section .label {
    line-height: 13px;
}
.grid .h-section th, .grid .h-section td {
    border-bottom: 1px solid #333;
}
.grid .head {
    padding-right: 12px;
    background: #0f766e;
    box-shadow: inset -1px -1px 0 #a5d8d2;
    color: #fff;
    font-size: 10px;
    font-weight: bold;
    text-align: center;
    white-space: nowrap;
}
.grid .head.full {
    padding-right: 0;
}
.filter {
    position: absolute;
    right: 1px;
    bottom: 0;
    display: flex;
    align-items: center;
    justify-content: center;
    width: 12px;
    height: 12px;
    border: 1px solid #555;
    background: #fff;
}
.filter::after {
    border-width: 4px 3px 0;
}

/* charts */
.chart {
    position: absolute;
    left: 656px;
    width: 414px;
    height: 207px;
    fill: #1a1a1a;
    font-family: Carlito, Lato, sans-serif;
    font-size: 8px;
}
.chart-bar { top: 40px; }
.chart-pie { top: 353px; }
.chart-title {
    fill: #000;
    font-size: 15px;
    font-weight: bold;
    text-anchor: middle;
}
.chart .end {
    text-anchor: end;
}
.chart .axis {
    font-weight: bold;
    text-anchor: middle;
}

/* scrollbars */
.vscroll {
    width: 10px;
    padding: 1px 2px;
    background: #cfcfcf;
}
.vscroll .thumb {
    height: 47%;
    border-radius: 3px;
    background: #7f7f7f;
}
.hscroll {
    display: flex;
    align-items: center;
    justify-content: space-between;
    flex: none;
    height: 9px;
    margin-right: 10px;
    padding: 0 1px 0 2px;
    background: #cfcfcf;
}
.hscroll .thumb {
    width: 46.500%;
    height: 6px;
    border-radius: 3px;
    background: #7f7f7f;
}
.hscroll i {
    width: 1px;
    height: 6px;
    background: #333;
}

/* sheet tabs */
.tabs {
    display: flex;
    flex: none;
    height: 17px;
    padding-left: 6px;
    font-size: 8px;
}
.tab-nav {
    width: 60px;
    height: 14px;
    margin: 1px 8px 0 0;
}
.add-sheet {
    position: relative;
    width: 11px;
    height: 14px;
    margin: 1px 7px 0 0;
    border: 1px solid #e3e1df;
    background: #fff;
}
.add-sheet span {
    position: absolute;
    right: -2px;
    top: 4px;
    width: 5px;
    height: 5px;
    border: 1px solid #2a64c0;
    border-radius: 50%;
}
.tab {
    position: relative;
    height: 16px;
    padding: 0 8px;
}
.tab.active {
    background: #fff;
    border-bottom: 2px solid #8b8b8b;
    font-weight: bold;
    color: #222;
}
.tab:not(.active)::after {
    content: "";
    position: absolute;
    right: 0;
    top: 4px;
    width: 1px;
    height: 8px;
    background: #c9c7c5;
}
.tab.last {
    padding: 0 12px;
}

/* sidebar */
.sidebar {
    position: relative;
    display: flex;
    flex-direction: column;
    align-items: center;
    gap: 5px;
    width: 39px;
    padding-top: 2px;
    border-left: 1px solid #d3d0cd;
}
.sidebar .fx {
    font-size: 18px;
}
.handle {
    position: absolute;
    left: -1px;
    top: 268px;
    width: 5px;
    height: 50px;
    background: #999;
}
.handle::after {
    content: "";
    position: absolute;
    left: 1px;
    top: 23px;
    border: 2px solid transparent;
    border-left: 3px solid #fff;
    border-right: 0;
}

/* status bar */
.statusbar {
    display: flex;
    flex: none;
    align-items: center;
    height: 17px;
    border-top: 1px solid #d3d0cd;
    font-size: 8px;
}
.statusbar > div {
    display: flex;
    align-items: center;
    height: 13px;
    padding-left: 6px;
    border-right: 1px solid #e0dedb;
    white-space: nowrap;
}
.statusbar .s-icon {
    width: 21px;
}
.s-icon svg {
    width: 13px;
    height: 13px;
}
.s-sheet { flex: 162 1 0; }
.s-sel { flex: 222 1 0; }
.s-page { flex: 192 1 0; }
.s-lang { flex: 172 1 0; justify-content: center; }
.s-sum { flex: 187 1 0; justify-content: center; }
.s-insert { width: 46px; }
.s-mode { width: 30px; }
.s-mode svg {
    width: 20px;
    height: 14px;
    overflow: visible;
}
.s-small { width: 20px; }
.statusbar .s-zoom {
    width: 96px;
    padding-right: 4px;
    gap: 2px;
}
.s-zoom button {
    width: 8px;
    color: #222;
    font-size: 13px;
    font-weight: bold;
    line-height: 12px;
}
.s-zoom input {
    appearance: none;
    flex: 1;
    min-width: 0;
    height: 1px;
    background: #999;
}
.s-zoom input::-webkit-slider-thumb {
    appearance: none;
    width: 3px;
    height: 7px;
    border: 1px solid #555;
    background: #fff;
}
.statusbar .s-percent {
    width: 33px;
    border: 0;
}
```
